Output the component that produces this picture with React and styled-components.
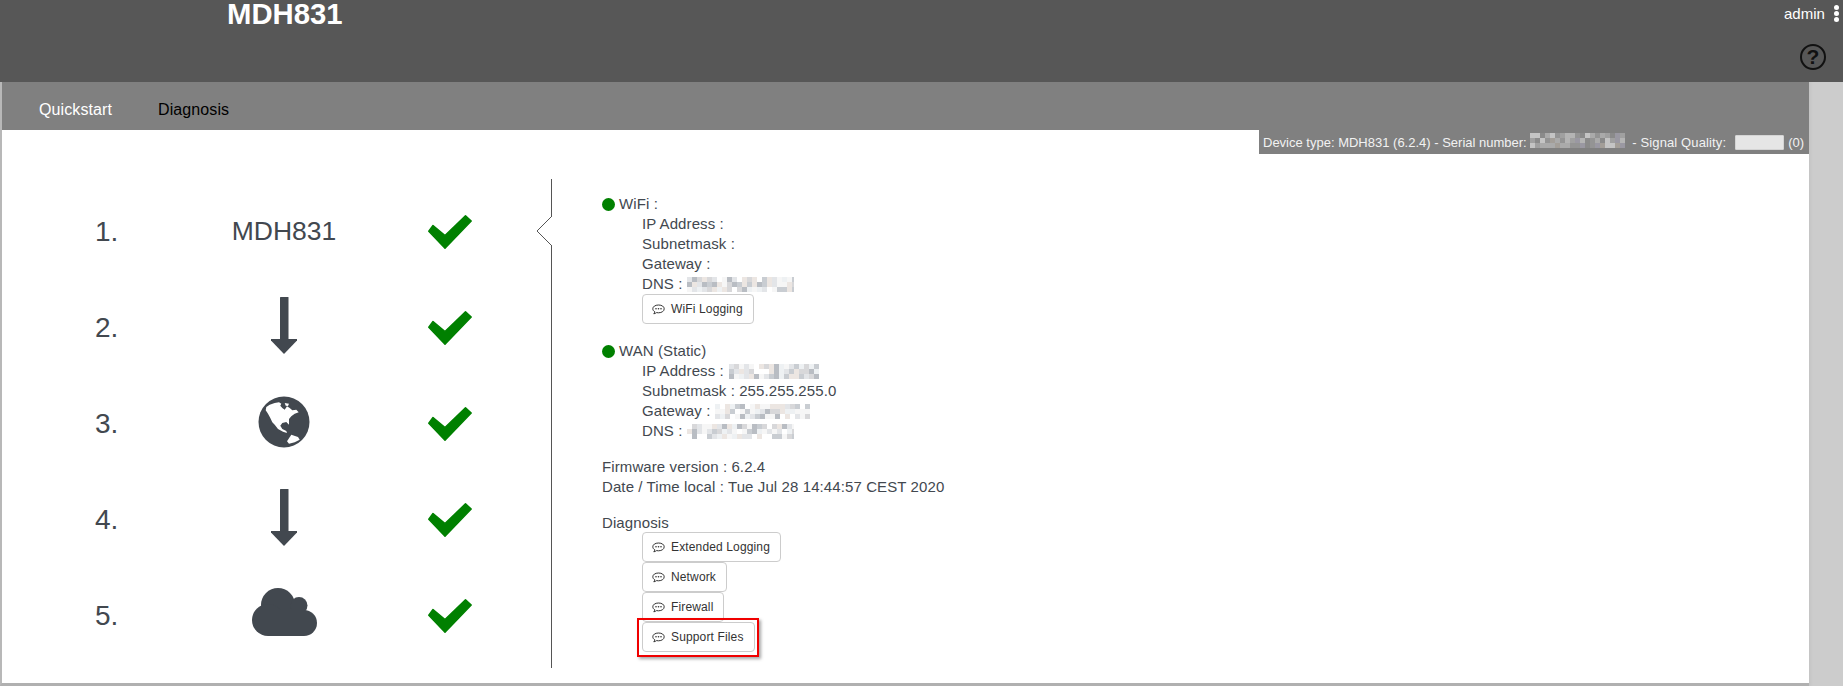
import React from "react";
import styled, { createGlobalStyle } from "styled-components";

const Global = createGlobalStyle`
  html, body { margin: 0; padding: 0; background: #cccccc; }
  body { font-family: "Liberation Sans", Arial, sans-serif; }
`;

const Page = styled.div`
  width: 1843px;
  height: 686px;
  overflow: hidden;
  display: flex;
  flex-direction: column;
`;

const Header = styled.header`
  height: 82px;
  flex: none;
  background: #575757;
  display: flex;
  justify-content: space-between;
  position: relative;
`;

const Title = styled.h1`
  margin: 0;
  padding-left: 227px;
  font-size: 29.3px;
  line-height: 28px;
  font-weight: 700;
  color: #ffffff;
`;

const HeaderRight = styled.div`
  width: 59px;
  display: flex;
  flex-direction: column;
  padding-top: 4px;
`;

const UserRow = styled.div`
  display: flex;
  align-items: center;
  justify-content: space-between;
  padding-right: 4px;
  height: 18px;
  font-size: 15px;
  color: #ffffff;
`;

const Dots = styled.span`
  display: flex;
  flex-direction: column;
  gap: 1px;
  & > i {
    display: block;
    width: 5px;
    height: 5px;
    border-radius: 50%;
    background: #ffffff;
  }
`;

const HelpCircle = styled.div`
  width: 26px;
  height: 26px;
  box-sizing: border-box;
  margin: 22px 0 0 16px;
  border: 2px solid #111111;
  border-radius: 50%;
  display: flex;
  align-items: center;
  justify-content: center;
  font-size: 21px;
  font-weight: 700;
  color: #111111;
`;

const Shell = styled.div`
  flex: 1;
  display: flex;
  min-height: 0;
`;

const Main = styled.div`
  width: 1809px;
  flex: none;
  box-sizing: border-box;
  border-left: 2px solid #b8b8b8;
  border-bottom: 3px solid #b0b0b0;
  background: #ffffff;
  display: flex;
  flex-direction: column;
`;

const Gutter = styled.div`
  flex: 1;
  background: linear-gradient(90deg, #c4c4c4 0, #cccccc 4px);
`;

const Nav = styled.nav`
  height: 48px;
  flex: none;
  background: #808080;
  display: flex;
  align-items: center;
  gap: 46px;
  padding: 7px 0 0 37px;
  box-sizing: border-box;
`;

const NavItem = styled.a`
  font-size: 16px;
  letter-spacing: 0.1px;
  color: ${(p) => (p.$active ? "#ffffff" : "#000000")};
`;

const StatusBar = styled.div`
  align-self: flex-end;
  width: 550px;
  height: 24px;
  box-sizing: border-box;
  background: #808080;
  color: #f2f2f2;
  font-size: 13px;
  display: flex;
  align-items: center;
  padding-left: 4px;
  white-space: pre;
`;

const SerialMask = styled.span`
  display: block;
  margin: 0 7px 3px 0;
`;

const SignalBox = styled.span`
  width: 49px;
  height: 15px;
  margin: 0 4px 0 9px;
  background: #e6e6e6;
  border: 1px solid #d4d4d4;
  box-sizing: border-box;
  border-radius: 1px;
`;

const SignalText = styled.span`
  letter-spacing: 0.12px;
`;

const Content = styled.div`
  display: flex;
  margin-top: 25px;
`;

const Steps = styled.div`
  width: 549px;
  flex: none;
  box-sizing: border-box;
  padding: 5px 0 0 93px;
  display: grid;
  grid-template-columns: 120px 138px 194px;
  grid-auto-rows: 96px;
  align-items: center;
  color: #42484f;
`;

const StepNumber = styled.div`
  font-size: 28px;
`;

const StepIcon = styled.div`
  display: flex;
  justify-content: center;
  align-items: center;
  font-size: 26.5px;
  margin-bottom: ${(p) => p.$lift || 0}px;
`;

const StepCheck = styled.div`
  display: flex;
  justify-content: center;
`;

const Details = styled.section`
  position: relative;
  flex: 1;
  height: 489px;
  box-sizing: border-box;
  border-left: 1px solid #555555;
  padding: 15px 0 0 50px;
  color: #42484f;
  font-size: 15px;
  letter-spacing: 0.1px;
  line-height: 20px;
`;

const Notch = styled.svg`
  position: absolute;
  left: -16px;
  top: 36px;
`;

const Block = styled.div`
  margin-bottom: ${(p) => p.$gap || 0}px;
`;

const StatusLine = styled.div`
  display: flex;
  align-items: center;
  gap: 4px;
`;

const Dot = styled.span`
  width: 13px;
  height: 13px;
  border-radius: 50%;
  background: #008000;
`;

const Indented = styled.div`
  padding-left: 40px;
  display: flex;
  flex-direction: column;
  align-items: flex-start;
  margin-top: ${(p) => p.$top || 0}px;
`;

const Line = styled.div`
  display: flex;
  align-items: center;
  white-space: pre;
`;

const Button = styled.button`
  position: relative;
  height: 30px;
  box-sizing: border-box;
  display: inline-flex;
  align-items: center;
  gap: 6px;
  padding: 0 10px 0 9px;
  background: #ffffff;
  border: 1px solid #cccccc;
  border-radius: 4px;
  font-family: inherit;
  font-size: 12px;
  letter-spacing: 0.14px;
  color: #333333;
  ${(p) =>
    p.$highlight &&
    `
    &::after {
      content: "";
      position: absolute;
      left: -6px;
      right: -5px;
      top: -5px;
      bottom: -6px;
      border: 2.5px solid #f00000;
      box-shadow: 2px 2px 3px rgba(0, 0, 0, 0.35);
    }
  `}
`;

const Blur = styled.svg`
  display: block;
  flex: none;
  margin-left: ${(p) => p.$left || 0}px;
`;

const Pixelated = ({ width, height, seed, palette, left }) => {
  const size = 5;
  const cells = [];
  let s = seed;
  for (let y = 0; y < height; y += size) {
    for (let x = 0; x < width; x += size) {
      s = (s * 9301 + 49297) % 233280;
      const fill = palette[Math.floor((s / 233280) * palette.length)];
      cells.push(<rect key={`${x}-${y}`} x={x} y={y} width={size} height={size} fill={fill} />);
    }
  }
  return (
    <Blur width={width} height={height} $left={left}>
      {cells}
    </Blur>
  );
};

const lightPalette = ["#ffffff", "#f6f6f6", "#eef1f3", "#e3e5e8", "#d8d8da", "#c9cdd2", "#ece6e2", "#b9bdc3"];
const greyPalette = ["#8a8a8a", "#949494", "#a0a0a0", "#aaaaaa", "#b4b4b4", "#9a98a2", "#a39e98", "#c4c4c4"];

const CheckMark = () => (
  <svg width="44" height="34" viewBox="0 0 44 34">
    <polygon
      points="5,10.5 17,20.5 37.5,0.8 43.2,6 17,33.2 0.8,16.2"
      fill="#008000"
      stroke="#008000"
      strokeWidth="1.5"
      strokeLinejoin="round"
    />
  </svg>
);

const ArrowDown = () => (
  <svg width="26" height="57" viewBox="0 0 26 57">
    <rect x="9" y="0" width="8.5" height="43" rx="0.5" fill="#42484f" />
    <polygon points="0,42 26,42 26,43.5 13,57 0,43.5" fill="#42484f" />
  </svg>
);

const Globe = () => (
  <svg width="52" height="52" viewBox="0 0 52 52">
    <circle cx="26" cy="26" r="25.5" fill="#42484f" />
    <polygon
      fill="#ffffff"
      points="8.3,11 11.7,8.7 16.7,7 21,6.3 23.3,7.7 22.3,9.7 24.3,12 26.7,13.7 29,10.3 31.7,12 34.3,14.3 38.3,13.7 40.7,16.3 36.7,17.7 33.3,20.3 31,23 31,28.7 28.3,26 24.3,27 22.3,29.7 24.3,33 28.3,35 29,37 25,35.7 20,33 16.7,28.7 14.3,26.3 12.3,22 10,17.7 7.7,14.3"
    />
    <polygon fill="#ffffff" points="26.7,7 31,7.7 30,10 27.7,9.7" />
    <polygon fill="#ffffff" points="29,45.3 33.3,38.7 40,41 41.7,43.7 36.7,46.3 31,47.7" />
  </svg>
);

const Cloud = () => (
  <svg width="65" height="48" viewBox="0 0 65 48" fill="#42484f">
    <circle cx="26" cy="17" r="17" />
    <circle cx="47" cy="17.5" r="8.5" />
    <circle cx="52" cy="35" r="13" />
    <circle cx="16" cy="32" r="16" />
    <rect x="16" y="22" width="36" height="26" />
  </svg>
);

const CommentIcon = () => (
  <svg width="13" height="11" viewBox="0 0 13 11" fill="none">
    <path
      d="M6.5 1C3.2 1 .8 2.6.8 4.8c0 1.3.8 2.3 2 3 -.1.7-.5 1.4-1 2 1 -.1 2-.6 2.7-1.2.6.1 1.3.2 2 .2 3.3 0 5.7-1.7 5.7-4S9.8 1 6.5 1Z"
      stroke="#333333"
      strokeWidth="1"
    />
    <circle cx="4" cy="4.8" r=".8" fill="#333333" />
    <circle cx="6.5" cy="4.8" r=".8" fill="#333333" />
    <circle cx="9" cy="4.8" r=".8" fill="#333333" />
  </svg>
);

const LogButton = ({ children, highlight }) => (
  <Button $highlight={highlight}>
    <CommentIcon />
    {children}
  </Button>
);

const steps = [
  { icon: "MDH831", lift: 2 },
  { icon: <ArrowDown />, lift: 6 },
  { icon: <Globe />, lift: 4 },
  { icon: <ArrowDown />, lift: 6 },
  { icon: <Cloud />, lift: 8 },
];

export default function App() {
  return (
    <Page>
      <Global />
      <Header>
        <Title>MDH831</Title>
        <HeaderRight>
          <UserRow>
            admin
            <Dots>
              <i />
              <i />
              <i />
            </Dots>
          </UserRow>
          <HelpCircle>?</HelpCircle>
        </HeaderRight>
      </Header>
      <Shell>
        <Main>
          <Nav>
            <NavItem $active>Quickstart</NavItem>
            <NavItem>Diagnosis</NavItem>
          </Nav>
          <StatusBar>
            Device type: MDH831 (6.2.4) - Serial number:{" "}
            <SerialMask>
              <Pixelated width={95} height={15} seed={17} palette={greyPalette} />
            </SerialMask>
            <SignalText>{"- Signal Quality:"}</SignalText>
            <SignalBox />
            (0)
          </StatusBar>
          <Content>
            <Steps>
              {steps.map((step, i) => (
                <React.Fragment key={i}>
                  <StepNumber>{i + 1}.</StepNumber>
                  <StepIcon $lift={step.lift}>{step.icon}</StepIcon>
                  <StepCheck>
                    <CheckMark />
                  </StepCheck>
                </React.Fragment>
              ))}
            </Steps>
            <Details>
              <Notch width="16" height="32" viewBox="0 0 16 32">
                <path d="M16 1 L1 16 L16 31" fill="#ffffff" stroke="#555555" strokeWidth="1" />
              </Notch>
              <Block $gap={17}>
                <StatusLine>
                  <Dot />
                  WiFi :
                </StatusLine>
                <Indented>
                  <Line>IP Address :</Line>
                  <Line>Subnetmask :</Line>
                  <Line>Gateway :</Line>
                  <Line>
                    DNS :{" "}
                    <Pixelated width={107} height={15} seed={5} palette={lightPalette} />
                  </Line>
                  <LogButton>WiFi Logging</LogButton>
                </Indented>
              </Block>
              <Block $gap={16}>
                <StatusLine>
                  <Dot />
                  WAN (Static)
                </StatusLine>
                <Indented>
                  <Line>
                    IP Address :{" "}
                    <Pixelated width={90} height={15} seed={31} left={1} palette={lightPalette} />
                  </Line>
                  <Line>Subnetmask : 255.255.255.0</Line>
                  <Line>
                    Gateway :{" "}
                    <Pixelated width={95} height={15} seed={77} palette={lightPalette} />
                  </Line>
                  <Line>
                    DNS :{" "}
                    <Pixelated width={107} height={15} seed={123} palette={lightPalette} />
                  </Line>
                </Indented>
              </Block>
              <Block $gap={16}>
                <div>Firmware version : 6.2.4</div>
                <div>Date / Time local : Tue Jul 28 14:44:57 CEST 2020</div>
              </Block>
              <Block>
                <div>Diagnosis</div>
                <Indented $top={-1}>
                  <LogButton>Extended Logging</LogButton>
                  <LogButton>Network</LogButton>
                  <LogButton>Firewall</LogButton>
                  <LogButton highlight>Support Files</LogButton>
                </Indented>
              </Block>
            </Details>
          </Content>
        </Main>
        <Gutter />
      </Shell>
    </Page>
  );
}
